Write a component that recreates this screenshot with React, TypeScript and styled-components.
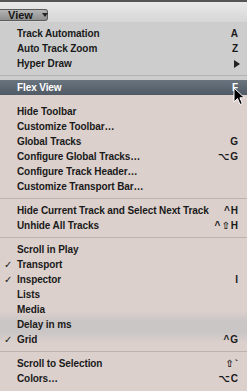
import React from 'react';
import styled, { createGlobalStyle } from 'styled-components';

const GlobalStyles = createGlobalStyle`
  body {
    margin: 0;
    background: #dcd0cd;
    font-family: 'Liberation Sans', Arial, sans-serif;
  }
`;

const Screen = styled.div`
  position: relative;
  width: 247px;
  height: 391px;
  overflow: hidden;
`;

const TopBar = styled.div`
  height: 20px;
  border-top: 2px solid #555;
  background: linear-gradient(#e9e9e9, #d6d6d6);
  box-sizing: content-box;
`;

const ViewButton = styled.div`
  margin-top: 7px;
  width: 48px;
  height: 12px;
  box-sizing: border-box;
  display: flex;
  align-items: center;
  gap: 9px;
  padding-left: 8px;
  border: 1px solid #5c5c5c;
  border-left: none;
  border-radius: 0 3px 3px 0;
  background: linear-gradient(#b4b4b4, #8f8f8f);
  font-size: 11px;
  font-weight: bold;
  color: #161616;
`;

const DownArrow = styled.span`
  width: 0;
  height: 0;
  border-left: 3px solid transparent;
  border-right: 3px solid transparent;
  border-top: 4px solid #222;
`;

const Section = styled.div<{ $tone: 'gray' | 'pink' }>`
  background: ${(p) =>
    p.$tone === 'gray'
      ? '#cdcdcd'
      : 'linear-gradient(#dcd0cd 0, #dcd0cd 216px, #cbc6c6 226px, #cbc6c6 238px, #dcd0cd 248px)'};
  padding-top: ${(p) => (p.$tone === 'gray' ? '4px' : '0')};
  padding-bottom: ${(p) => (p.$tone === 'pink' ? '5px' : '0')};
`;

const Row = styled.div<{ $active?: boolean }>`
  height: 15px;
  display: grid;
  grid-template-columns: 17px 1fr auto;
  align-items: center;
  padding-right: 9px;
  font-size: 10px;
  font-weight: bold;
  letter-spacing: -0.1px;
  color: ${(p) => (p.$active ? '#fff' : '#1a1a1a')};
  background: ${(p) => (p.$active ? 'linear-gradient(#6a747e, #4f5a65)' : 'transparent')};
  white-space: nowrap;
`;

const Check = styled.span`
  font-family: 'DejaVu Sans', sans-serif;
  font-size: 10px;
  padding-left: 4px;
`;

const Shortcut = styled.span`
  font-family: 'Liberation Sans', 'DejaVu Sans', sans-serif;
  font-size: 10px;
  font-weight: bold;
  letter-spacing: 1px;
  margin-right: -1px;
`;

const SubArrow = styled.span`
  width: 0;
  height: 0;
  margin-right: -2px;
  border-top: 4px solid transparent;
  border-bottom: 4px solid transparent;
  border-left: 6px solid #222;
`;

const Separator = styled.div<{ $line: string }>`
  height: 9px;
  display: flex;
  align-items: center;
  &::after {
    content: '';
    flex: 1;
    height: 1px;
    background: ${(p) => p.$line};
  }
`;

const Cursor = styled.svg`
  position: absolute;
  left: 233px;
  top: 87px;
`;

type Item = { label: string; hint?: string; check?: boolean; sub?: boolean };

const MenuRow = ({ label, hint, check, sub, active }: Item & { active?: boolean }) => (
  <Row $active={active}>
    <span>{check && <Check>✓</Check>}</span>
    <span>{label}</span>
    {sub ? <SubArrow /> : <Shortcut>{hint}</Shortcut>}
  </Row>
);

const groups: Item[][] = [
  [
    { label: 'Hide Toolbar' },
    { label: 'Customize Toolbar…' },
    { label: 'Global Tracks', hint: 'G' },
    { label: 'Configure Global Tracks…', hint: '⌥G' },
    { label: 'Configure Track Header…' },
    { label: 'Customize Transport Bar…' },
  ],
  [
    { label: 'Hide Current Track and Select Next Track', hint: '^H' },
    { label: 'Unhide All Tracks', hint: '^⇧H' },
  ],
  [
    { label: 'Scroll in Play' },
    { label: 'Transport', check: true },
    { label: 'Inspector', hint: 'I', check: true },
    { label: 'Lists' },
    { label: 'Media' },
    { label: 'Delay in ms' },
    { label: 'Grid', hint: '^G', check: true },
  ],
  [
    { label: 'Scroll to Selection', hint: '⇧`' },
    { label: 'Colors…', hint: '⌥C' },
  ],
];

export default function App() {
  return (
    <Screen>
      <GlobalStyles />
      <TopBar>
        <ViewButton>
          View <DownArrow />
        </ViewButton>
      </TopBar>

      <Section $tone="gray">
        <MenuRow label="Track Automation" hint="A" />
        <MenuRow label="Auto Track Zoom" hint="Z" />
        <MenuRow label="Hyper Draw" sub />
        <Separator $line="#b3b3b3" />
      </Section>

      <MenuRow label="Flex View" hint="F" active />

      <Section $tone="pink">
        {groups.map((g, i) => (
          <React.Fragment key={i}>
            <Separator $line={i === 0 ? 'transparent' : '#bfb3b1'} />
            {g.map((item) => (
              <MenuRow key={item.label} {...item} />
            ))}
          </React.Fragment>
        ))}
      </Section>

      <Cursor width="13" height="19" viewBox="0 0 13 19">
        <path d="M1 1 L1 15 L4.5 11.5 L7 17.5 L9.3 16.5 L6.9 10.8 L11.5 10.8 Z" fill="#000" stroke="#fff" strokeWidth="1" />
      </Cursor>
    </Screen>
  );
}
